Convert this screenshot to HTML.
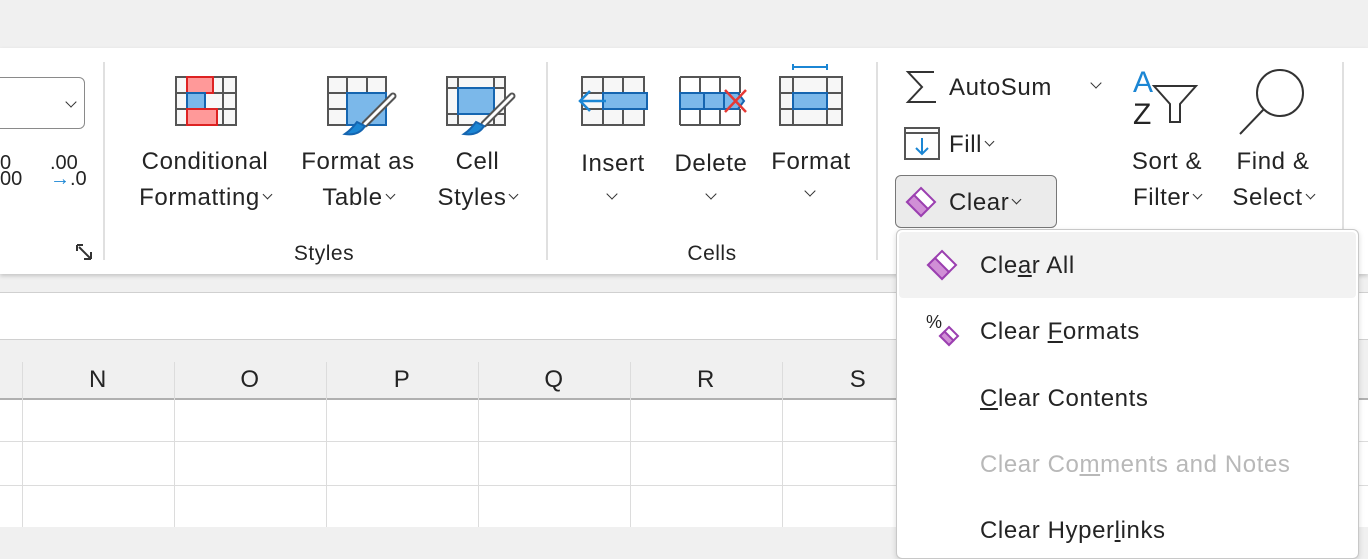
<!DOCTYPE html>
<html><head><style>
*{margin:0;padding:0;box-sizing:border-box}
body{width:1368px;height:546px;overflow:hidden;background:#f0f0f0;font-family:"Liberation Sans",sans-serif;color:#242424;position:relative}
.a{position:absolute;white-space:nowrap}
.t{font-size:24px;line-height:24px;letter-spacing:0.6px}
.c{text-align:center}
svg{position:absolute;overflow:visible}
.ch{display:inline-block;width:7px;height:7px;border-right:1.8px solid #333;border-bottom:1.8px solid #333;transform:rotate(45deg);vertical-align:middle;position:relative;top:-4px;margin-left:4px}
.chb{position:absolute;width:8px;height:8px;border-right:1.8px solid #333;border-bottom:1.8px solid #333;transform:rotate(45deg)}
</style></head><body>
<!-- ribbon -->
<div class="a" style="left:0;top:48px;width:1368px;height:226px;background:#fff;box-shadow:0 2px 4px rgba(0,0,0,0.18)"></div>
<div class="a" style="left:-10px;top:77px;width:95px;height:52px;border:1.5px solid #8a8a8a;border-radius:6px;background:#fff"></div>
<div class="chb" style="left:67px;top:98px"></div>
<div class="a" style="left:0;top:155px;font-size:20px;line-height:16px">0<br>00</div>
<div class="a" style="left:50px;top:155px;font-size:20px;line-height:16px">.00<br><span style="color:#1b86d4">&rarr;</span>.0</div>
<svg style="left:76px;top:244px" width="18" height="18"><path d="M1 1H7M1 1V7M3 3L15 15M15 15H8M15 15V8" stroke="#333" stroke-width="2" fill="none"/></svg>
<div class="a" style="left:103px;top:62px;width:2px;height:198px;background:#e0e0e0"></div>
<div class="a" style="left:546px;top:62px;width:2px;height:198px;background:#e0e0e0"></div>
<div class="a" style="left:876px;top:62px;width:2px;height:198px;background:#e0e0e0"></div>
<div class="a" style="left:1342px;top:62px;width:2px;height:198px;background:#e0e0e0"></div>

<svg style="left:175px;top:76px" width="62" height="50"><rect x="1" y="1" width="60" height="48" fill="#f7f7f7" stroke="#555" stroke-width="2"/><path d="M12 1V49M48 1V49M1 17H61M1 33H61" stroke="#555" stroke-width="2"/><rect x="12" y="1" width="26" height="16" fill="#f99" stroke="#d22" stroke-width="2"/><rect x="12" y="17" width="18" height="16" fill="#7bb8ea" stroke="#1565b0" stroke-width="2"/><rect x="12" y="33" width="30" height="16" fill="#f99" stroke="#d22" stroke-width="2"/></svg>
<svg style="left:327px;top:76px" width="70" height="60"><rect x="1" y="1" width="58" height="48" fill="#f7f7f7" stroke="#555" stroke-width="2"/><path d="M20 1V49M40 1V49M1 17H59M1 33H59" stroke="#555" stroke-width="2"/><rect x="20" y="17" width="39" height="32" fill="#7bb8ea" stroke="#1565b0" stroke-width="2"/><path d="M66 20L38 48" stroke="#555" stroke-width="7" stroke-linecap="round"/><path d="M66 20L38 48" stroke="#fff" stroke-width="3" stroke-linecap="round"/><path d="M30 46Q24 54 18 58Q32 60 38 50Z" fill="#1b86d4" stroke="#1565b0" stroke-width="2"/></svg>
<svg style="left:446px;top:76px" width="70" height="60"><rect x="1" y="1" width="58" height="48" fill="#f7f7f7" stroke="#555" stroke-width="2"/><path d="M12 1V49M48 1V49M1 12H59M1 38H59" stroke="#555" stroke-width="2"/><rect x="12" y="12" width="36" height="26" fill="#7bb8ea" stroke="#1565b0" stroke-width="2"/><path d="M66 20L38 48" stroke="#555" stroke-width="7" stroke-linecap="round"/><path d="M66 20L38 48" stroke="#fff" stroke-width="3" stroke-linecap="round"/><path d="M30 46Q24 54 18 58Q32 60 38 50Z" fill="#1b86d4" stroke="#1565b0" stroke-width="2"/></svg>

<div class="a t c" style="left:120px;width:170px;top:150px">Conditional</div>
<div class="a t c" style="left:120px;width:170px;top:186px">Formatting<span class="ch"></span></div>
<div class="a t c" style="left:293px;width:130px;top:150px">Format as</div>
<div class="a t c" style="left:293px;width:130px;top:186px">Table<span class="ch"></span></div>
<div class="a t c" style="left:420px;width:115px;top:150px">Cell</div>
<div class="a t c" style="left:420px;width:115px;top:186px">Styles<span class="ch"></span></div>
<div class="a c" style="left:254px;width:140px;top:242px;font-size:21px;letter-spacing:0.5px">Styles</div>

<svg style="left:578px;top:76px" width="72" height="50"><rect x="4" y="1" width="62" height="48" fill="#f7f7f7" stroke="#555" stroke-width="2"/><path d="M25 1V49M45 1V49M4 17H66M4 33H66" stroke="#555" stroke-width="2"/><rect x="25" y="17" width="44" height="16" fill="#7bb8ea" stroke="#1565b0" stroke-width="2"/><path d="M2 25H28M12 15L2 25L12 35" stroke="#1b86d4" stroke-width="2.5" fill="none"/></svg>
<svg style="left:678px;top:76px" width="72" height="50"><path d="M2 1H62M2 49H62M2 1V17M2 33V49M22 1V49M42 1V49M62 1V17M62 33V49M2 17H62M2 33H62" stroke="#555" stroke-width="2" fill="none"/><rect x="2" y="17" width="44" height="16" fill="#f7f7f7"/><path d="M2 17H60L66 25L60 33H2Z" fill="#7bb8ea" stroke="#1565b0" stroke-width="2"/><path d="M46 17V33M26 17V33" stroke="#1565b0" stroke-width="2"/><path d="M47 14L68 36M68 14L47 36" stroke="#e53935" stroke-width="2.5"/></svg>
<svg style="left:779px;top:64px" width="64" height="62"><path d="M14 3H48M14 0V6M48 0V6" stroke="#1b86d4" stroke-width="2"/><rect x="1" y="13" width="62" height="48" fill="#f7f7f7" stroke="#555" stroke-width="2"/><path d="M14 13V61M48 13V61M1 29H63M1 45H63" stroke="#555" stroke-width="2"/><rect x="14" y="29" width="34" height="16" fill="#7bb8ea" stroke="#1565b0" stroke-width="2"/></svg>
<div class="a t c" style="left:563px;width:100px;top:152px">Insert</div>
<div class="chb" style="left:608px;top:190px"></div>
<div class="a t c" style="left:661px;width:100px;top:152px">Delete</div>
<div class="chb" style="left:707px;top:190px"></div>
<div class="a t c" style="left:760px;width:102px;top:150px">Format</div>
<div class="chb" style="left:806px;top:187px"></div>
<div class="a c" style="left:662px;width:100px;top:242px;font-size:21px;letter-spacing:0.5px">Cells</div>

<svg style="left:906px;top:70px" width="32" height="34"><path d="M28 2H2L16 17L2 32H30" stroke="#333" stroke-width="2" fill="none"/></svg>
<div class="a t" style="left:949px;top:76px">AutoSum</div>
<div class="chb" style="left:1092px;top:79px"></div>
<svg style="left:904px;top:127px" width="36" height="34"><rect x="1" y="1" width="34" height="31" fill="#fff" stroke="#555" stroke-width="2"/><path d="M1 6H35" stroke="#555" stroke-width="2"/><path d="M18 11V27M12 21L18 27L24 21" stroke="#1b86d4" stroke-width="2" fill="none"/></svg>
<div class="a t" style="left:949px;top:133px">Fill<span class="ch"></span></div>
<div class="a" style="left:895px;top:175px;width:162px;height:53px;background:#ebebeb;border:1.5px solid #777;border-radius:6px"></div>
<svg style="left:905px;top:186px" width="32" height="32"><path d="M16 2L30 16L16 30L2 16Z" fill="#fff" stroke="#9b3fb0" stroke-width="2"/><path d="M9 9L23 23L16 30L2 16Z" fill="#d08fd6" stroke="#9b3fb0" stroke-width="2"/></svg>
<div class="a t" style="left:949px;top:191px">Clear<span class="ch"></span></div>
<div class="a" style="left:1133px;top:68px;font-size:30px;line-height:30px;color:#1b86d4">A</div>
<div class="a" style="left:1133px;top:100px;font-size:30px;line-height:30px">Z</div>
<svg style="left:1152px;top:84px" width="48" height="40"><path d="M2 2H44L28 20V38H18V20Z" fill="#fff" stroke="#333" stroke-width="2"/></svg>
<svg style="left:1238px;top:68px" width="70" height="68"><circle cx="42" cy="25" r="23" fill="#fff" stroke="#333" stroke-width="2"/><path d="M26 41L2 66" stroke="#333" stroke-width="2"/></svg>
<div class="a t c" style="left:1112px;width:110px;top:150px">Sort &amp;</div>
<div class="a t c" style="left:1112px;width:110px;top:186px">Filter<span class="ch"></span></div>
<div class="a t c" style="left:1218px;width:110px;top:150px">Find &amp;</div>
<div class="a t c" style="left:1218px;width:110px;top:186px">Select<span class="ch"></span></div>

<div class="a" style="left:0;top:292px;width:1368px;height:48px;background:#fff;border-top:1px solid #d0d0d0;border-bottom:1px solid #d0d0d0"></div>
<div class="a" style="left:0;top:340px;width:1368px;height:60px;background:#f0f0f0;border-bottom:2px solid #b0b0b0"></div>
<div class="a" style="left:0;top:400px;width:1368px;height:127px;background:#fff"></div>
<div class="a" style="left:0;top:441px;width:1368px;height:1px;background:#dcdcdc"></div>
<div class="a" style="left:0;top:485px;width:1368px;height:1px;background:#dcdcdc"></div>
<div class="a" style="left:22px;top:362px;width:1px;height:165px;background:#dcdcdc"></div>
<div class="a" style="left:174px;top:362px;width:1px;height:165px;background:#dcdcdc"></div>
<div class="a" style="left:326px;top:362px;width:1px;height:165px;background:#dcdcdc"></div>
<div class="a" style="left:478px;top:362px;width:1px;height:165px;background:#dcdcdc"></div>
<div class="a" style="left:630px;top:362px;width:1px;height:165px;background:#dcdcdc"></div>
<div class="a" style="left:782px;top:362px;width:1px;height:165px;background:#dcdcdc"></div>
<div class="a t c" style="left:22px;width:152px;top:368px">N</div>
<div class="a t c" style="left:174px;width:152px;top:368px">O</div>
<div class="a t c" style="left:326px;width:152px;top:368px">P</div>
<div class="a t c" style="left:478px;width:152px;top:368px">Q</div>
<div class="a t c" style="left:630px;width:152px;top:368px">R</div>
<div class="a t c" style="left:782px;width:152px;top:368px">S</div>

<div class="a" style="left:896px;top:229px;width:463px;height:330px;background:#fff;border:1.5px solid #c8c8c8;border-radius:6px;box-shadow:0 2px 6px rgba(0,0,0,0.15)"></div>
<div class="a" style="left:899px;top:232px;width:457px;height:66px;background:#f2f2f2;border-radius:4px"></div>
<svg style="left:926px;top:249px" width="32" height="32"><path d="M16 2L30 16L16 30L2 16Z" fill="#fff" stroke="#9b3fb0" stroke-width="2"/><path d="M9 9L23 23L16 30L2 16Z" fill="#d08fd6" stroke="#9b3fb0" stroke-width="2"/></svg>
<div class="a t" style="left:980px;top:254px">Cle<u>a</u>r All</div>
<div class="a" style="left:926px;top:312px;font-size:18px">%</div>
<svg style="left:939px;top:326px" width="20" height="20"><path d="M10 1L19 10L10 19L1 10Z" fill="#fff" stroke="#9b3fb0" stroke-width="2"/><path d="M5.5 5.5L14.5 14.5L10 19L1 10Z" fill="#d08fd6" stroke="#9b3fb0" stroke-width="2"/></svg>
<div class="a t" style="left:980px;top:320px">Clear <u>F</u>ormats</div>
<div class="a t" style="left:980px;top:387px"><u>C</u>lear Contents</div>
<div class="a t" style="left:980px;top:453px;color:#b8b8b8">Clear Co<u>m</u>ments and Notes</div>
<div class="a t" style="left:980px;top:519px">Clear Hyper<u>l</u>inks</div>
</body></html>
